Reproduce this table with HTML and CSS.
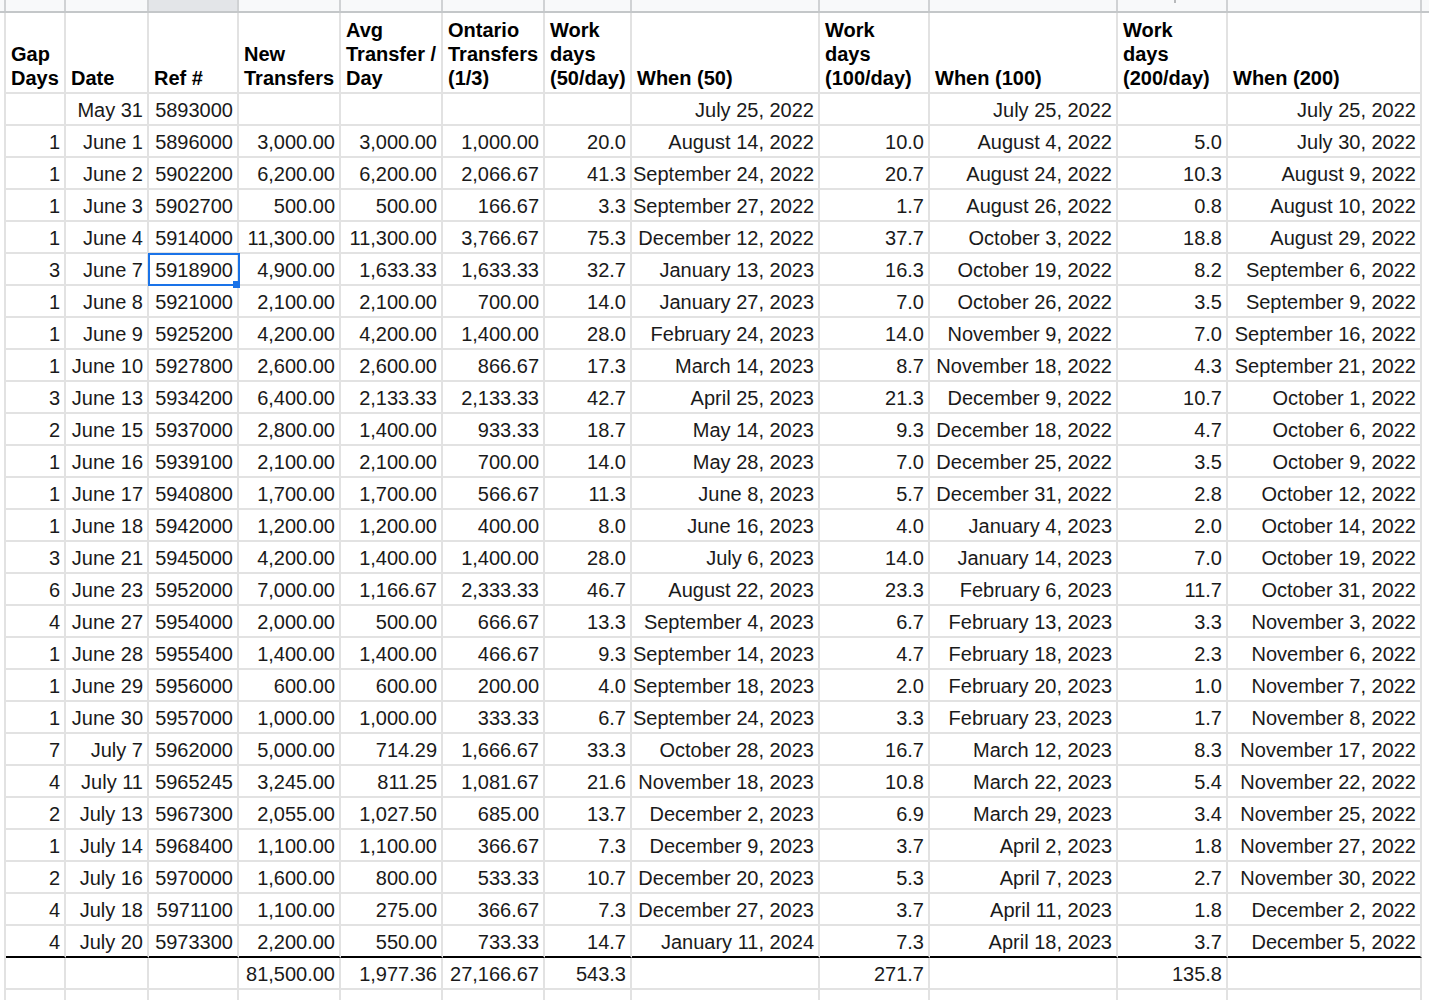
FILE: index.html
```html
<!DOCTYPE html>
<html lang="en">
<head>
<meta charset="utf-8">
<title>Transfers</title>
<link rel="stylesheet" href="styles.css">
</head>
<body>
<div class="strip">
  <div class="grid">
    <div></div><div></div><div class="hl"></div><div></div><div></div><div></div><div></div><div></div><div></div><div></div><div><span class="tick"></span></div><div></div>
  </div>
</div>
<div class="grid head">
  <div>Gap<br>Days</div><div>Date</div><div>Ref #</div><div>New<br>Transfers</div><div>Avg<br>Transfer /<br>Day</div><div>Ontario<br>Transfers<br>(1/3)</div><div>Work<br>days<br>(50/day)</div><div>When (50)</div><div>Work<br>days<br>(100/day)</div><div>When (100)</div><div>Work<br>days<br>(200/day)</div><div>When (200)</div>
</div>
<div class="grid"><div></div><div>May 31</div><div>5893000</div><div></div><div></div><div></div><div></div><div>July 25, 2022</div><div></div><div>July 25, 2022</div><div></div><div>July 25, 2022</div></div>
<div class="grid"><div>1</div><div>June 1</div><div>5896000</div><div>3,000.00</div><div>3,000.00</div><div>1,000.00</div><div>20.0</div><div>August 14, 2022</div><div>10.0</div><div>August 4, 2022</div><div>5.0</div><div>July 30, 2022</div></div>
<div class="grid"><div>1</div><div>June 2</div><div>5902200</div><div>6,200.00</div><div>6,200.00</div><div>2,066.67</div><div>41.3</div><div>September 24, 2022</div><div>20.7</div><div>August 24, 2022</div><div>10.3</div><div>August 9, 2022</div></div>
<div class="grid"><div>1</div><div>June 3</div><div>5902700</div><div>500.00</div><div>500.00</div><div>166.67</div><div>3.3</div><div>September 27, 2022</div><div>1.7</div><div>August 26, 2022</div><div>0.8</div><div>August 10, 2022</div></div>
<div class="grid"><div>1</div><div>June 4</div><div>5914000</div><div>11,300.00</div><div>11,300.00</div><div>3,766.67</div><div>75.3</div><div>December 12, 2022</div><div>37.7</div><div>October 3, 2022</div><div>18.8</div><div>August 29, 2022</div></div>
<div class="grid"><div>3</div><div>June 7</div><div class="sel">5918900</div><div>4,900.00</div><div>1,633.33</div><div>1,633.33</div><div>32.7</div><div>January 13, 2023</div><div>16.3</div><div>October 19, 2022</div><div>8.2</div><div>September 6, 2022</div></div>
<div class="grid"><div>1</div><div>June 8</div><div>5921000</div><div>2,100.00</div><div>2,100.00</div><div>700.00</div><div>14.0</div><div>January 27, 2023</div><div>7.0</div><div>October 26, 2022</div><div>3.5</div><div>September 9, 2022</div></div>
<div class="grid"><div>1</div><div>June 9</div><div>5925200</div><div>4,200.00</div><div>4,200.00</div><div>1,400.00</div><div>28.0</div><div>February 24, 2023</div><div>14.0</div><div>November 9, 2022</div><div>7.0</div><div>September 16, 2022</div></div>
<div class="grid"><div>1</div><div>June 10</div><div>5927800</div><div>2,600.00</div><div>2,600.00</div><div>866.67</div><div>17.3</div><div>March 14, 2023</div><div>8.7</div><div>November 18, 2022</div><div>4.3</div><div>September 21, 2022</div></div>
<div class="grid"><div>3</div><div>June 13</div><div>5934200</div><div>6,400.00</div><div>2,133.33</div><div>2,133.33</div><div>42.7</div><div>April 25, 2023</div><div>21.3</div><div>December 9, 2022</div><div>10.7</div><div>October 1, 2022</div></div>
<div class="grid"><div>2</div><div>June 15</div><div>5937000</div><div>2,800.00</div><div>1,400.00</div><div>933.33</div><div>18.7</div><div>May 14, 2023</div><div>9.3</div><div>December 18, 2022</div><div>4.7</div><div>October 6, 2022</div></div>
<div class="grid"><div>1</div><div>June 16</div><div>5939100</div><div>2,100.00</div><div>2,100.00</div><div>700.00</div><div>14.0</div><div>May 28, 2023</div><div>7.0</div><div>December 25, 2022</div><div>3.5</div><div>October 9, 2022</div></div>
<div class="grid"><div>1</div><div>June 17</div><div>5940800</div><div>1,700.00</div><div>1,700.00</div><div>566.67</div><div>11.3</div><div>June 8, 2023</div><div>5.7</div><div>December 31, 2022</div><div>2.8</div><div>October 12, 2022</div></div>
<div class="grid"><div>1</div><div>June 18</div><div>5942000</div><div>1,200.00</div><div>1,200.00</div><div>400.00</div><div>8.0</div><div>June 16, 2023</div><div>4.0</div><div>January 4, 2023</div><div>2.0</div><div>October 14, 2022</div></div>
<div class="grid"><div>3</div><div>June 21</div><div>5945000</div><div>4,200.00</div><div>1,400.00</div><div>1,400.00</div><div>28.0</div><div>July 6, 2023</div><div>14.0</div><div>January 14, 2023</div><div>7.0</div><div>October 19, 2022</div></div>
<div class="grid"><div>6</div><div>June 23</div><div>5952000</div><div>7,000.00</div><div>1,166.67</div><div>2,333.33</div><div>46.7</div><div>August 22, 2023</div><div>23.3</div><div>February 6, 2023</div><div>11.7</div><div>October 31, 2022</div></div>
<div class="grid"><div>4</div><div>June 27</div><div>5954000</div><div>2,000.00</div><div>500.00</div><div>666.67</div><div>13.3</div><div>September 4, 2023</div><div>6.7</div><div>February 13, 2023</div><div>3.3</div><div>November 3, 2022</div></div>
<div class="grid"><div>1</div><div>June 28</div><div>5955400</div><div>1,400.00</div><div>1,400.00</div><div>466.67</div><div>9.3</div><div>September 14, 2023</div><div>4.7</div><div>February 18, 2023</div><div>2.3</div><div>November 6, 2022</div></div>
<div class="grid"><div>1</div><div>June 29</div><div>5956000</div><div>600.00</div><div>600.00</div><div>200.00</div><div>4.0</div><div>September 18, 2023</div><div>2.0</div><div>February 20, 2023</div><div>1.0</div><div>November 7, 2022</div></div>
<div class="grid"><div>1</div><div>June 30</div><div>5957000</div><div>1,000.00</div><div>1,000.00</div><div>333.33</div><div>6.7</div><div>September 24, 2023</div><div>3.3</div><div>February 23, 2023</div><div>1.7</div><div>November 8, 2022</div></div>
<div class="grid"><div>7</div><div>July 7</div><div>5962000</div><div>5,000.00</div><div>714.29</div><div>1,666.67</div><div>33.3</div><div>October 28, 2023</div><div>16.7</div><div>March 12, 2023</div><div>8.3</div><div>November 17, 2022</div></div>
<div class="grid"><div>4</div><div>July 11</div><div>5965245</div><div>3,245.00</div><div>811.25</div><div>1,081.67</div><div>21.6</div><div>November 18, 2023</div><div>10.8</div><div>March 22, 2023</div><div>5.4</div><div>November 22, 2022</div></div>
<div class="grid"><div>2</div><div>July 13</div><div>5967300</div><div>2,055.00</div><div>1,027.50</div><div>685.00</div><div>13.7</div><div>December 2, 2023</div><div>6.9</div><div>March 29, 2023</div><div>3.4</div><div>November 25, 2022</div></div>
<div class="grid"><div>1</div><div>July 14</div><div>5968400</div><div>1,100.00</div><div>1,100.00</div><div>366.67</div><div>7.3</div><div>December 9, 2023</div><div>3.7</div><div>April 2, 2023</div><div>1.8</div><div>November 27, 2022</div></div>
<div class="grid"><div>2</div><div>July 16</div><div>5970000</div><div>1,600.00</div><div>800.00</div><div>533.33</div><div>10.7</div><div>December 20, 2023</div><div>5.3</div><div>April 7, 2023</div><div>2.7</div><div>November 30, 2022</div></div>
<div class="grid"><div>4</div><div>July 18</div><div>5971100</div><div>1,100.00</div><div>275.00</div><div>366.67</div><div>7.3</div><div>December 27, 2023</div><div>3.7</div><div>April 11, 2023</div><div>1.8</div><div>December 2, 2022</div></div>
<div class="grid last"><div>4</div><div>July 20</div><div>5973300</div><div>2,200.00</div><div>550.00</div><div>733.33</div><div>14.7</div><div>January 11, 2024</div><div>7.3</div><div>April 18, 2023</div><div>3.7</div><div>December 5, 2022</div></div>
<div class="grid"><div></div><div></div><div></div><div>81,500.00</div><div>1,977.36</div><div>27,166.67</div><div>543.3</div><div></div><div>271.7</div><div></div><div>135.8</div><div></div></div>
<div class="grid"><div></div><div></div><div></div><div></div><div></div><div></div><div></div><div></div><div></div><div></div><div></div><div></div></div>
</body>
</html>
```

FILE: styles.css
```css
html, body {
  margin: 0;
  padding: 0;
  background: #ffffff;
}

body {
  font-family: "Liberation Sans", Arial, sans-serif;
  font-size: 20px;
  color: #1a1a1a;
  overflow: hidden;
}

.grid {
  display: grid;
  grid-template-columns: 60px 83px 90px 102px 102px 102px 87px 188px 110px 188px 110px 194px;
  width: 1416px;
  margin-left: 4px;
  border-left: 2px solid #e2e2e2;
}

.grid > div {
  box-sizing: border-box;
  height: 32px;
  padding: 1px 4px 0 1px;
  line-height: 30px;
  text-align: right;
  white-space: nowrap;
  border-right: 2px solid #e2e2e2;
  border-bottom: 2px solid #e2e2e2;
}

/* column-letter strip (cropped) */
.strip {
  background: #f8f9fa;
  border-bottom: 2px solid #c4c7c9;
  height: 11px;
}

.strip .grid {
  border-left-color: #d0d2d4;
}

.strip .grid > div {
  height: 11px;
  padding: 0;
  border-bottom: none;
  border-right-color: #d0d2d4;
  position: relative;
}

.strip .grid > .hl {
  background: #e3e5e8;
}

.tick {
  position: absolute;
  left: 56px;
  top: 0;
  width: 2px;
  height: 3px;
  background: #b8babc;
}

/* header row */
.head > div {
  height: 81px;
  display: flex;
  align-items: flex-end;
  text-align: left;
  font-weight: bold;
  color: #000;
  line-height: 24px;
  padding: 0 4px 2px 5px;
}

/* thick separator below last data row */
.last > div {
  border-bottom-color: #000;
}

/* selected cell */
.sel {
  position: relative;
}

.sel::before {
  content: "";
  position: absolute;
  left: -1px;
  top: -1px;
  width: 92px;
  height: 33px;
  box-sizing: border-box;
  border: 2px solid #1a73e8;
}

.sel::after {
  content: "";
  position: absolute;
  left: 84px;
  top: 27px;
  width: 7px;
  height: 7px;
  background: #1a73e8;
  z-index: 2;
}
```
